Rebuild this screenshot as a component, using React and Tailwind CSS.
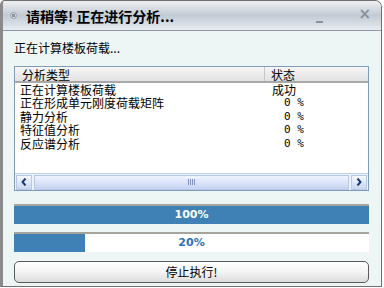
import React from 'react';

const rows = [
  { name: '正在计算楼板荷载', status: '成功' },
  { name: '正在形成单元刚度荷载矩阵', status: '0 %' },
  { name: '静力分析', status: '0 %' },
  { name: '特征值分析', status: '0 %' },
  { name: '反应谱分析', status: '0 %' },
];

const cjk = { fontFamily: '"Noto Sans CJK SC", "Liberation Sans", sans-serif' };

const ProgressBar = ({ value, textClass }) => (
  <div className="relative h-[20px] w-[355px] bg-white border-t-2 border-[#a4a49a]">
    <div className="h-full bg-[#3f81b5]" style={{ width: `${value}%` }} />
    <div
      className={`absolute inset-0 flex items-center justify-center text-[11px] font-bold ${textClass}`}
      style={{ fontFamily: '"DejaVu Sans", sans-serif' }}
    >
      {value}%
    </div>
  </div>
);

const Arrow = ({ dir }) => (
  <div className="w-[16px] h-[15px] flex items-center justify-center border border-[#b8c8e4] bg-gradient-to-b from-[#f4f8ff] to-[#cad6f0]">
    <svg width="6" height="8" viewBox="0 0 6 8">
      <path
        d={dir === 'left' ? 'M4.5 0.5 L1.5 4 L4.5 7.5' : 'M1.5 0.5 L4.5 4 L1.5 7.5'}
        fill="none"
        stroke="#1f3a70"
        strokeWidth="2"
      />
    </svg>
  </div>
);

export default function App() {
  return (
    <div className="w-[384px] h-[288px] bg-white overflow-hidden" style={cjk}>
      <div className="w-[382px] h-[287px] flex flex-col border border-[#6e6e6e] border-l-[3px] border-l-[#8a8a8a] rounded-tl-[5px] rounded-tr-[7px] overflow-hidden">
        {/* title bar */}
        <div className="h-[29px] flex items-center bg-gradient-to-b from-[#eef0f2] via-[#c2cad4] to-[#e8ecf2] pl-[7px] pr-[10px]">
          <div className="w-[7px] h-[7px] rounded-full bg-[#d8dce0] border border-[#9aa0a8] flex items-center justify-center">
            <div className="w-[3px] h-[3px] bg-[#8a9098]" />
          </div>
          <div className="ml-[9px] text-[14px] font-bold text-black leading-none">请稍等! 正在进行分析...</div>
          <div className="flex-1" />
          <div className="w-[7px] h-[2px] bg-[#8a9098] mt-[12px] mr-[35px]" />
          <div className="text-[15px] font-bold text-[#8c9198] leading-none mb-[2px]" style={{ fontFamily: '"DejaVu Sans", sans-serif' }}>×</div>
        </div>
        {/* body */}
        <div className="flex-1 flex flex-col bg-[#eef6f5] border-t border-[#8f9aa4] pl-[11px]">
          <div className="mt-[10px] text-[12px] leading-[14px] text-black">正在计算楼板荷载...</div>
          {/* list view */}
          <div className="mt-[11px] w-[355px] h-[125px] bg-white border border-[#7f9db9] flex flex-col">
            <div className="h-[16px] flex bg-gradient-to-b from-[#f6f6f6] to-[#e2e2e2] border-b-2 border-[#a8a8a8] text-[12px] leading-[15px]">
              <div className="w-[250px] pl-[7px] border-r border-[#c8c8c8]">分析类型</div>
              <div className="pl-[6px]">状态</div>
            </div>
            <div className="flex-1">
              {rows.map((r) => (
                <div key={r.name} className="flex h-[13.4px] text-[12px] leading-[13.4px]">
                  <div className="w-[257px] pl-[5px]">{r.name}</div>
                  {r.status === '成功' ? (
                    <div>{r.status}</div>
                  ) : (
                    <div className="pl-[12px]" style={{ fontFamily: '"DejaVu Sans Mono", monospace', fontSize: '11px' }}>0 %</div>
                  )}
                </div>
              ))}
            </div>
            {/* horizontal scrollbar */}
            <div className="h-[17px] flex items-center gap-[2px] px-[1px] bg-[#eef2fc] border-t border-[#c0cce8]">
              <Arrow dir="left" />
              <div className="flex-1 h-[15px] flex items-center justify-center border border-[#b8c8e4] bg-gradient-to-b from-[#f0f4ff] via-[#dce4fa] to-[#c6d2f0]">
                <div className="flex gap-[1px]">
                  <div className="w-[1px] h-[6px] bg-[#8090c0]" />
                  <div className="w-[1px] h-[6px] bg-[#8090c0]" />
                  <div className="w-[1px] h-[6px] bg-[#8090c0]" />
                  <div className="w-[1px] h-[6px] bg-[#8090c0]" />
                </div>
              </div>
              <Arrow dir="right" />
            </div>
          </div>
          <div className="mt-[13px]">
            <ProgressBar value={100} textClass="text-white" />
          </div>
          <div className="mt-[8px]">
            <ProgressBar value={20} textClass="text-[#2f6fbf]" />
          </div>
          <button className="mt-[9px] w-[355px] h-[22px] rounded-[5px] border border-[#5a5a5a] bg-gradient-to-b from-white via-[#f4f4f4] to-[#dcdcdc] text-[12px] leading-none text-black">
            停止执行!
          </button>
        </div>
      </div>
    </div>
  );
}
